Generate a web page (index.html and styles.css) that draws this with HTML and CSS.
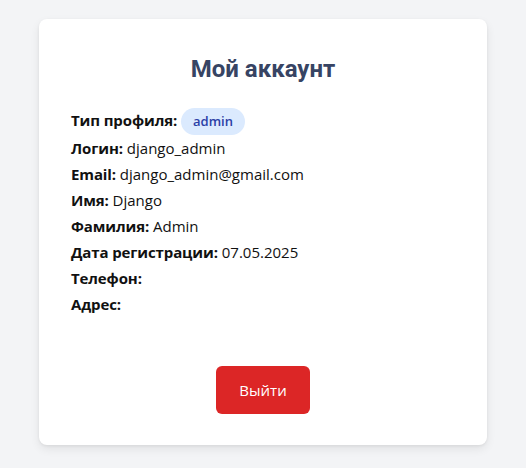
FILE: index.html
```html
<!DOCTYPE html>
<html lang="ru">
<head>
<meta charset="utf-8">
<title>Мой аккаунт</title>
<link rel="stylesheet" href="styles.css">
</head>
<body>
<main class="page">
  <section class="card">
    <h1 class="title">Мой аккаунт</h1>
    <div class="info">
      <div class="row"><b>Тип профиля:</b> <span class="badge">admin</span></div>
      <div class="row"><b>Логин:</b> django_admin</div>
      <div class="row"><b>Email:</b> django_admin@gmail.com</div>
      <div class="row"><b>Имя:</b> Django</div>
      <div class="row"><b>Фамилия:</b> Admin</div>
      <div class="row"><b>Дата регистрации:</b> 07.05.2025</div>
      <div class="row"><b>Телефон:</b> </div>
      <div class="row"><b>Адрес:</b> </div>
    </div>
    <div class="actions">
      <button class="logout" type="button">Выйти</button>
    </div>
  </section>
</main>
</body>
</html>
```
FILE: styles.css
```css
* { box-sizing: border-box; }
html, body { margin: 0; padding: 0; }
body {
  background: #f3f4f6;
  font-family: "Open Sans", "Noto Sans", sans-serif;
  color: #111;
}
.page {
  padding: 19px 39px 24px;
}
.card {
  max-width: 448px;
  margin: 0 auto;
  background: #fff;
  border-radius: 8px;
  box-shadow: 0 4px 10px rgba(0, 0, 0, 0.08), 0 1px 3px rgba(0, 0, 0, 0.06);
  padding: 34px 32px 31px;
}
.title {
  margin: 0 0 22px;
  text-align: center;
  font-family: Roboto, "Open Sans", sans-serif;
  font-size: 24px;
  line-height: 32px;
  font-weight: 700;
  color: #374463;
}
.info {
  font-size: 15px;
}
.row {
  line-height: 26px;
  min-height: 26px;
}
.row b {
  font-weight: 700;
  letter-spacing: -0.12px;
}
.badge {
  display: inline-block;
  background: #dbeafe;
  color: #2b40a6;
  font-size: 13px;
  font-weight: 600;
  line-height: 19px;
  padding: 4px 12px;
  border-radius: 14px;
  vertical-align: middle;
}
.actions {
  display: flex;
  justify-content: center;
  margin-top: 49px;
}
.logout {
  font-family: inherit;
  font-size: 15px;
  line-height: 24px;
  padding: 12px 23px;
  border: 0;
  border-radius: 6px;
  background: #dc2626;
  color: #fff;
  cursor: pointer;
}
```
